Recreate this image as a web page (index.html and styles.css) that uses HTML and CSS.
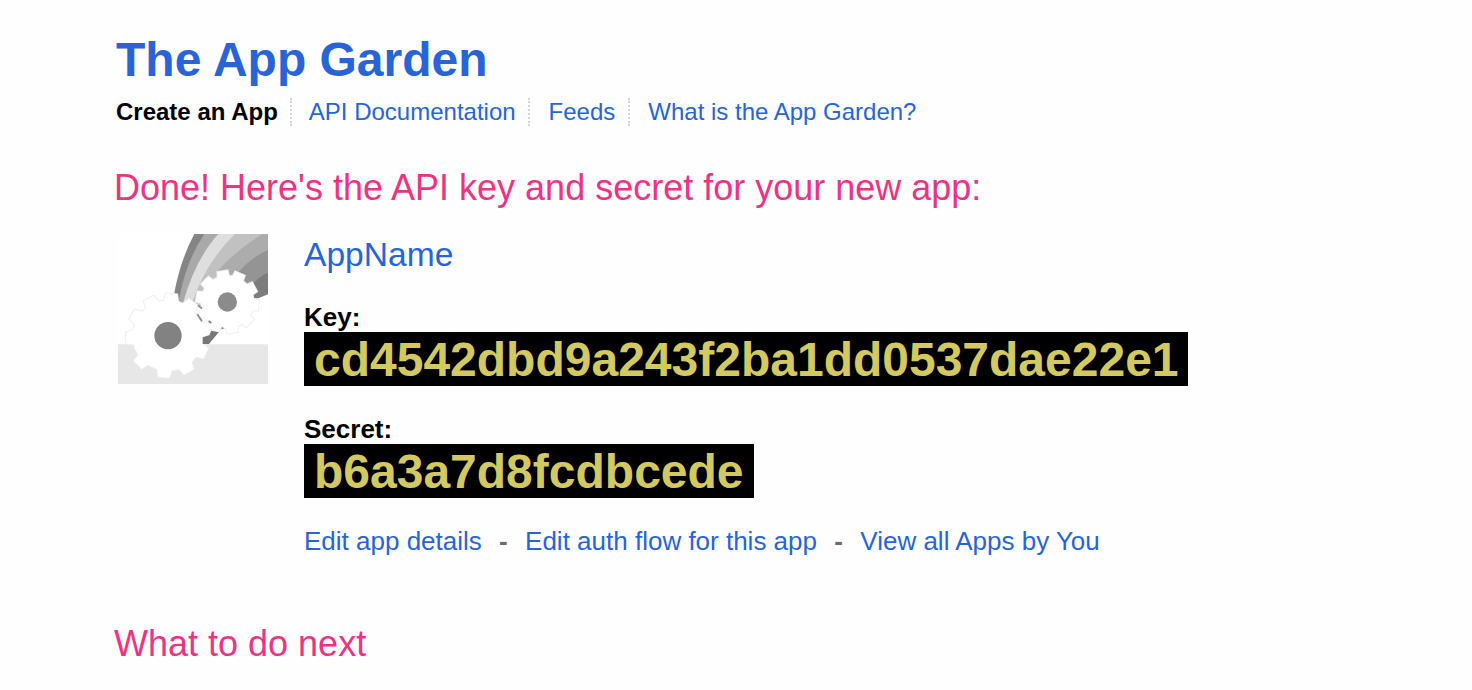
FILE: index.html
```html
<!DOCTYPE html>
<html lang="en">
<head>
<meta charset="utf-8">
<title>The App Garden</title>
<link rel="stylesheet" href="styles.css">
</head>
<body>
<main class="page">
  <h1 class="title">The App Garden</h1>
  <nav class="nav">
    <span class="nav-item current">Create an App</span>
    <a class="nav-item docs" href="#">API Documentation</a>
    <a class="nav-item feeds" href="#">Feeds</a>
    <a class="nav-item" href="#">What is the App Garden?</a>
  </nav>
  <h2 class="heading">Done! Here's the API key and secret for your new app:</h2>
  <section class="app">
    <svg class="app-icon" viewBox="24 24 450 450" aria-hidden="true">
      <defs>
        <filter id="soft" filterUnits="userSpaceOnUse" x="0" y="0" width="500" height="500"><feGaussianBlur stdDeviation="2"/></filter>
        <g id="big">
          <circle r="106"/>
          <path id="bt" d="M-23-98L-17-126H17L23-98Z" transform="rotate(5)"/>
          <use href="#bt" transform="rotate(-32)"/><use href="#bt" transform="rotate(-64)"/>
          <use href="#bt" transform="rotate(-98)"/><use href="#bt" transform="rotate(-139)"/>
          <use href="#bt" transform="rotate(-179)"/><use href="#bt" transform="rotate(145)"/>
          <use href="#bt" transform="rotate(110)"/><use href="#bt" transform="rotate(75)"/>
          <use href="#bt" transform="rotate(32)"/>
        </g>
        <g id="small">
          <circle r="79"/>
          <path id="st" d="M-18-72L-16-94H16L18-72Z" transform="rotate(-9)"/>
          <use href="#st" transform="rotate(33)"/><use href="#st" transform="rotate(70)"/>
          <use href="#st" transform="rotate(105)"/><use href="#st" transform="rotate(142)"/>
          <use href="#st" transform="rotate(179)"/><use href="#st" transform="rotate(216)"/>
          <use href="#st" transform="rotate(250)"/><use href="#st" transform="rotate(289)"/>
          <use href="#st" transform="rotate(-37)"/>
        </g>
      </defs>
      <g filter="url(#soft)">
        <path fill="#fff" d="M0 0H500V500H0Z"/>
        <path fill="#e7e7e7" d="M0 355H500V500H0Z"/>
        <path fill="#858585" d="M262 0L253 24Q212 100 193 200L215 235H330L500 120V0Z"/>
        <path fill="#a9a9a9" d="M300 0L283 24Q230 100 207 220L215 235H330L500 120V0Z"/>
        <path fill="#dedede" d="M345 0L325 24Q255 100 218 235H330L500 120V0Z"/>
        <path fill="#c1c1c1" d="M395 0L375 24Q285 110 243 240H350L500 120V0Z"/>
        <path fill="#acacac" d="M482 0L457 24Q375 75 318 140L380 230L500 140V0Z"/>
        <path fill="#949494" d="M500 58L474 72Q420 95 375 150L400 240L500 160Z"/>
        <path fill="#7b7b7b" d="M500 128L474 140Q440 155 415 190L425 217H445L474 205L500 200Z"/>
        <g stroke="#ededed" stroke-width="5"><use href="#big" x="174" y="329"/><use href="#small" x="352" y="228"/></g>
        <g fill="#fff"><use href="#big" x="174" y="329"/><use href="#small" x="352" y="228"/></g>
        <path fill="none" stroke="#888" stroke-width="5" d="M264 238L276 248M262 265L276 286M296 285L304 291M335 308L340 305"/>
        <path fill="#777" d="M278 354V334L298 328L304 314L326 319L297 354Z"/>
        <circle cx="174" cy="329" r="41" fill="#828282"/>
        <circle cx="352" cy="228" r="29" fill="#8b8b8b"/>
      </g>
    </svg>
    <div class="details">
      <a class="app-name" href="#">AppName</a>
      <div class="field">
        <div class="label">Key:</div>
        <div class="value key">cd4542dbd9a243f2ba1dd0537dae22e1</div>
      </div>
      <div class="field">
        <div class="label">Secret:</div>
        <div class="value">b6a3a7d8fcdbcede</div>
      </div>
      <div class="actions">
        <a href="#">Edit app details</a>
        <b>-</b>
        <a href="#">Edit auth flow for this app</a>
        <b>-</b>
        <a href="#">View all Apps by You</a>
      </div>
    </div>
  </section>
  <h2 class="heading next">What to do next</h2>
</main>
</body>
</html>
```
FILE: styles.css
```css
body {
  margin: 0;
  background: #fefefe;
  color: #000;
  font-family: "Liberation Sans", Arial, sans-serif;
}
a { color: #2864d6; text-decoration: none; }
.page { padding: 32px 0 0 114px; white-space: nowrap; }
.title {
  margin: 0 0 10px 2px;
  color: #2864d6;
  font-size: 48px;
  line-height: 56px;
}
.nav { display: flex; margin-left: 2px; font-size: 24px; line-height: 28px; }
.nav-item { padding: 0 12px 0 18px; }
.nav-item.current { padding-left: 0; font-weight: bold; }
.nav-item:not(:last-child) { border-right: 2px dotted #d4d4d4; }
.nav-item.docs { padding-left: 17px; }
.nav-item.feeds { padding-left: 19px; padding-right: 13px; }
.heading {
  margin: 41px 0 0;
  color: #ed3482;
  font-size: 36px;
  font-weight: normal;
  line-height: 42px;
}
.app { display: flex; gap: 36px; margin: 25px 0 0 4px; align-items: flex-start; }
.app-icon { width: 150px; height: 150px; flex: none; }
.details {
  display: flex;
  flex-direction: column;
  align-items: flex-start;
  gap: 28px;
}
.app-name { padding-top: 1px; font-size: 33.6px; line-height: 39px; }
.label { font-size: 26px; font-weight: bold; line-height: 30px; }
.value {
  box-sizing: border-box;
  width: max-content;
  padding: 1px 10px 0;
  background: #000;
  color: #d3c962;
  font-size: 48px;
  font-weight: bold;
  line-height: 53px;
}
.value.key { padding-right: 9px; }
.actions { display: flex; gap: 17.3px; font-size: 26px; line-height: 30px; }
.actions b { color: #6b6b6b; }
.next { margin-top: 67px; }
```
